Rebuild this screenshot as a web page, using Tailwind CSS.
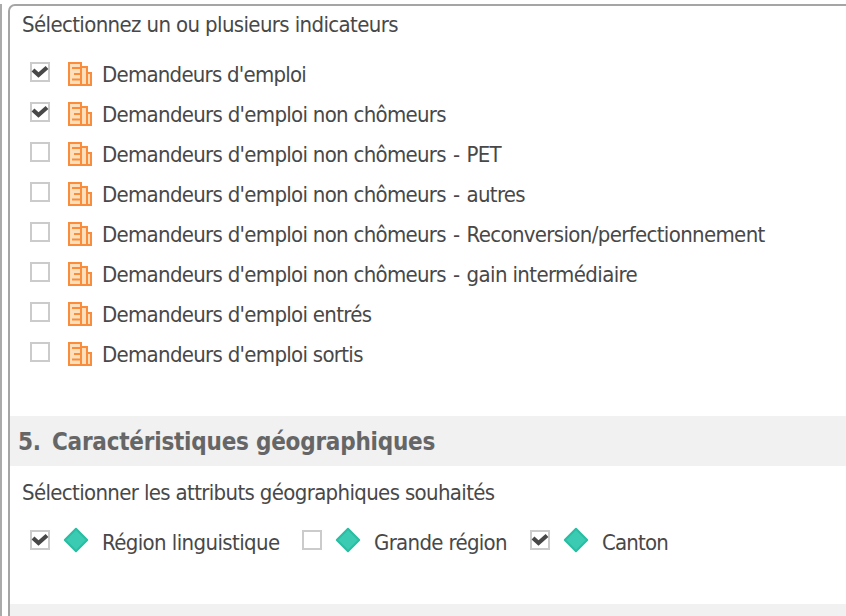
<!DOCTYPE html>
<html lang="fr">
<head>
<meta charset="utf-8">
<title>Indicateurs</title>
<script src="https://cdn.jsdelivr.net/npm/@tailwindcss/browser@4"></script>
</head>
<body class="w-[846px] h-[616px] overflow-hidden bg-white font-['DejaVu_Sans_Condensed','DejaVu_Sans',sans-serif] font-stretch-condensed text-[22px] text-[#484848]">
<svg width="0" height="0" class="hidden">
  <symbol id="off" viewBox="0 0 20 20"><rect x="1" y="1" width="18" height="18" fill="#fff" stroke="#cbcbcb" stroke-width="2"/></symbol>
  <symbol id="on" viewBox="0 0 20 20"><rect x="1" y="1" width="18" height="18" fill="#fff" stroke="#cbcbcb" stroke-width="2"/><path d="M3 8 8.500 13 17 5.500" fill="none" stroke="#484848" stroke-width="4.200"/></symbol>
  <symbol id="bld" viewBox="0 0 24 24"><path d="M1 1H13V5H19V11H23V23H1Z" fill="#fde0bb" stroke="#f98d3c" stroke-width="2"/><path d="M13 5V23M19 11V23M4 6H13M6 12H13M4 17.500H13" fill="none" stroke="#f98d3c" stroke-width="2"/></symbol>
  <symbol id="dia" viewBox="0 0 26 26"><path d="M13 1.800 24.200 13 13 24.200 1.800 13Z" fill="#3acbb2" stroke="#2bbda3" stroke-width="2" stroke-linejoin="round"/></symbol>
</svg>
<div class="flex h-full pt-1">
  <div class="w-[2px] shrink-0 bg-[#aaa]"></div>
  <main class="ml-[6px] h-[640px] w-[850px] shrink-0 rounded-tl-[7px] border-2 border-[#a5a5a5] whitespace-nowrap">
    <p class="h-[48px] pl-3 leading-[38px] tracking-[-0.625px]">Sélectionnez un ou plusieurs indicateurs</p>
    <ul class="h-[362px] pl-5 leading-[42px] tracking-[-0.7px]">
      <li class="flex h-10"><svg class="mt-2 size-5"><use href="#on"/></svg><svg class="mt-2 ml-[18px] size-6"><use href="#bld"/></svg><span class="ml-[10px] tracking-[-0.76px]">Demandeurs d'emploi</span></li>
      <li class="flex h-10"><svg class="mt-2 size-5"><use href="#on"/></svg><svg class="mt-2 ml-[18px] size-6"><use href="#bld"/></svg><span class="ml-[10px]">Demandeurs d'emploi non chômeurs</span></li>
      <li class="flex h-10"><svg class="mt-2 size-5"><use href="#off"/></svg><svg class="mt-2 ml-[18px] size-6"><use href="#bld"/></svg><span class="ml-[10px]">Demandeurs d'emploi non chômeurs<span class="[word-spacing:1.5px]"> - </span>PET</span></li>
      <li class="flex h-10"><svg class="mt-2 size-5"><use href="#off"/></svg><svg class="mt-2 ml-[18px] size-6"><use href="#bld"/></svg><span class="ml-[10px]">Demandeurs d'emploi non chômeurs<span class="[word-spacing:1.5px]"> - </span>autres</span></li>
      <li class="flex h-10"><svg class="mt-2 size-5"><use href="#off"/></svg><svg class="mt-2 ml-[18px] size-6"><use href="#bld"/></svg><span class="ml-[10px]">Demandeurs d'emploi non chômeurs<span class="[word-spacing:1.5px]"> - </span><span class="tracking-[-0.65px]">Reconversion/perfectionnement</span></span></li>
      <li class="flex h-10"><svg class="mt-2 size-5"><use href="#off"/></svg><svg class="mt-2 ml-[18px] size-6"><use href="#bld"/></svg><span class="ml-[10px]">Demandeurs d'emploi non chômeurs<span class="[word-spacing:1.5px]"> - </span><span class="tracking-[-0.62px]">gain intermédiaire</span></span></li>
      <li class="flex h-10"><svg class="mt-2 size-5"><use href="#off"/></svg><svg class="mt-2 ml-[18px] size-6"><use href="#bld"/></svg><span class="ml-[10px]">Demandeurs d'emploi entrés</span></li>
      <li class="flex h-10"><svg class="mt-2 size-5"><use href="#off"/></svg><svg class="mt-2 ml-[18px] size-6"><use href="#bld"/></svg><span class="ml-[10px]">Demandeurs d'emploi sortis</span></li>
    </ul>
    <h2 class="flex h-[50px] bg-[#f1f1f1] pl-2 text-[24px] leading-[52px] font-bold text-[#666] tracking-[-0.23px]"><span class="w-[34px]">5.</span><span>Caractéristiques géographiques</span></h2>
    <p class="h-[56px] pl-3 leading-[54px] tracking-[-0.65px]">Sélectionner les attributs géographiques souhaités</p>
    <div class="flex h-[82px] pl-5 leading-[42px] tracking-[-0.6px]">
      <div class="flex w-[272px]"><svg class="mt-2 size-5"><use href="#on"/></svg><svg class="mt-[5px] ml-[13px] size-[26px]"><use href="#dia"/></svg><span class="ml-[13px]">Région linguistique</span></div>
      <div class="flex w-[228px]"><svg class="mt-2 size-5"><use href="#off"/></svg><svg class="mt-[5px] ml-[13px] size-[26px]"><use href="#dia"/></svg><span class="ml-[13px] tracking-[-0.68px]">Grande région</span></div>
      <div class="flex"><svg class="mt-2 size-5"><use href="#on"/></svg><svg class="mt-[5px] ml-[13px] size-[26px]"><use href="#dia"/></svg><span class="ml-[13px] tracking-[-0.8px]">Canton</span></div>
    </div>
    <div class="h-[40px] bg-[#f1f1f1]"></div>
  </main>
</div>
</body>
</html>
